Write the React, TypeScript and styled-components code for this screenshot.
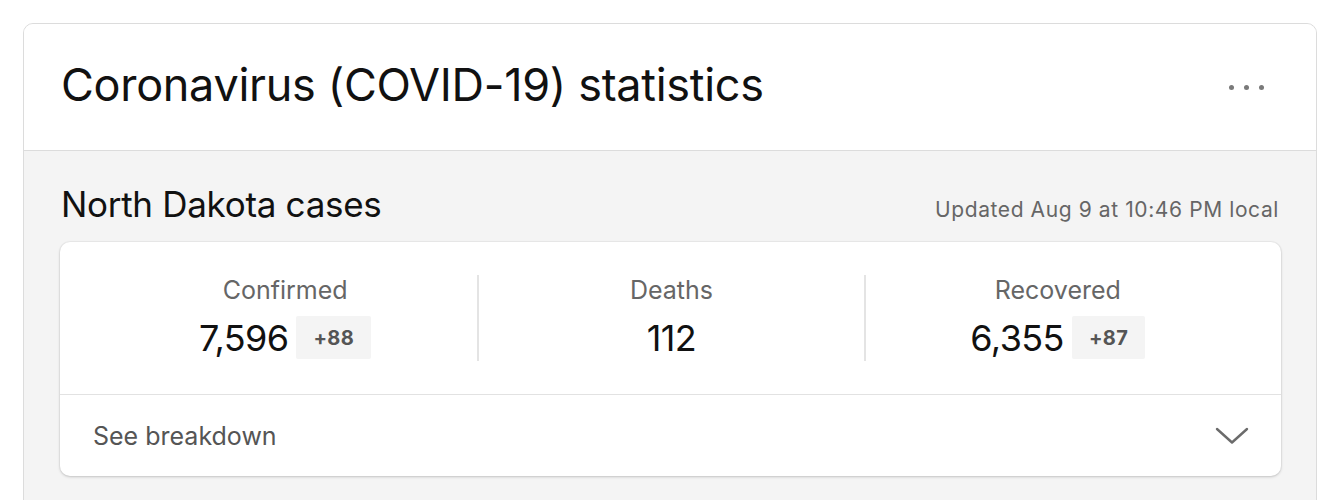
import { FC } from 'react'
import styled, { createGlobalStyle } from 'styled-components'

// ==============================|| data ||============================== //
interface IStat {
  label: string
  value: string
  delta?: string
}

const stats: IStat[] = [
  { label: 'Confirmed', value: '7,596', delta: '+88' },
  { label: 'Deaths', value: '112' },
  { label: 'Recovered', value: '6,355', delta: '+87' }
]

// ==============================|| index ||============================== //
const App: FC = () => {
  return (
    <Page>
      <GlobalStyle />
      <Card>
        <Header>
          <Title>Coronavirus (COVID-19) statistics</Title>
          <MoreButton aria-label="More options">
            <Dot />
            <Dot />
            <Dot />
          </MoreButton>
        </Header>

        <Body>
          <SectionHead>
            <Region>North Dakota cases</Region>
            <Updated>Updated Aug 9 at 10:46 PM local</Updated>
          </SectionHead>

          <Panel>
            <StatsRow>
              {stats.map((s, i) => (
                <StatCol key={s.label} divided={i > 0}>
                  <StatLabel>{s.label}</StatLabel>
                  <ValueRow>
                    <Value>{s.value}</Value>
                    {s.delta && <Delta>{s.delta}</Delta>}
                  </ValueRow>
                </StatCol>
              ))}
            </StatsRow>
            <Breakdown>
              <span>See breakdown</span>
              <svg width="34" height="18" viewBox="0 0 34 18" fill="none">
                <path d="M2 2 L17 15.5 L32 2" stroke="#6b6b6b" strokeWidth="2.4" strokeLinecap="round" strokeLinejoin="round" />
              </svg>
            </Breakdown>
          </Panel>
        </Body>
      </Card>
    </Page>
  )
}

const GlobalStyle = createGlobalStyle`
  html, body {
    margin: 0;
    background: #fff;
    font-family: Inter, "Noto Sans", "Liberation Sans", sans-serif;
    -webkit-font-smoothing: antialiased;
  }
`

const Page = styled.div`
  padding: 23px 13px 0 23px;
  height: 500px;
  box-sizing: border-box;
  overflow: hidden;
`

const Card = styled.div`
  border: 1px solid #dcdcdc;
  border-radius: 10px 10px 0 0;
  overflow: hidden;
  background: #f4f4f4;
`

const Header = styled.div`
  height: 127px;
  box-sizing: border-box;
  display: flex;
  align-items: center;
  justify-content: space-between;
  padding: 0 52px 6px 37px;
  background: #fff;
  border-bottom: 1px solid #dcdcdc;
`

const Title = styled.h1`
  margin: 0;
  font-size: 45px;
  font-weight: 400;
  color: #111;
  letter-spacing: -0.3px;
`

const MoreButton = styled.div`
  display: flex;
  gap: 10px;
  padding-top: 6px;
`

const Dot = styled.span`
  width: 5px;
  height: 5px;
  border-radius: 50%;
  background: #7a7a7a;
`

const Body = styled.div`
  padding: 0 35px 60px 36px;
`

const SectionHead = styled.div`
  height: 91px;
  box-sizing: border-box;
  padding-top: 33px;
  display: flex;
  align-items: baseline;
  justify-content: space-between;
`

const Region = styled.div`
  font-size: 35px;
  line-height: 40px;
  color: #111;
  padding-left: 1px;
  letter-spacing: -0.3px;
`

const Updated = styled.div`
  font-size: 21px;
  color: #666;
  padding-right: 2px;
  letter-spacing: 0.6px;
`

const Panel = styled.div`
  background: #fff;
  border-radius: 10px;
  box-shadow: 0 1px 3px rgba(0, 0, 0, 0.18), 0 0 0 1px rgba(0, 0, 0, 0.03);
`

const StatsRow = styled.div`
  display: grid;
  grid-template-columns: repeat(3, 1fr);
  padding: 33px 31px;
  border-bottom: 1px solid #e2e2e2;
`

const StatCol = styled.div<{ divided?: boolean }>`
  height: 86px;
  display: flex;
  flex-direction: column;
  align-items: center;
  border-left: ${p => (p.divided ? '2px solid #e4e4e4' : '2px solid transparent')};
`

const StatLabel = styled.div`
  font-size: 25px;
  line-height: 30px;
  color: #666;
`

const ValueRow = styled.div`
  margin-top: 11px;
  height: 43px;
  display: flex;
  align-items: center;
  gap: 8px;
`

const Value = styled.div`
  font-size: 36px;
  color: #111;
  letter-spacing: -0.6px;
`

const Delta = styled.div`
  height: 43px;
  display: flex;
  align-items: center;
  padding: 0 17px;
  background: #f4f4f4;
  border-radius: 2px;
  font-size: 20px;
  font-weight: 700;
  color: #555;
  letter-spacing: 0.4px;
`

const Breakdown = styled.div`
  height: 81px;
  display: flex;
  align-items: center;
  justify-content: space-between;
  padding: 0 32px 0 33px;
  font-size: 25px;
  color: #555;
`

export default App
